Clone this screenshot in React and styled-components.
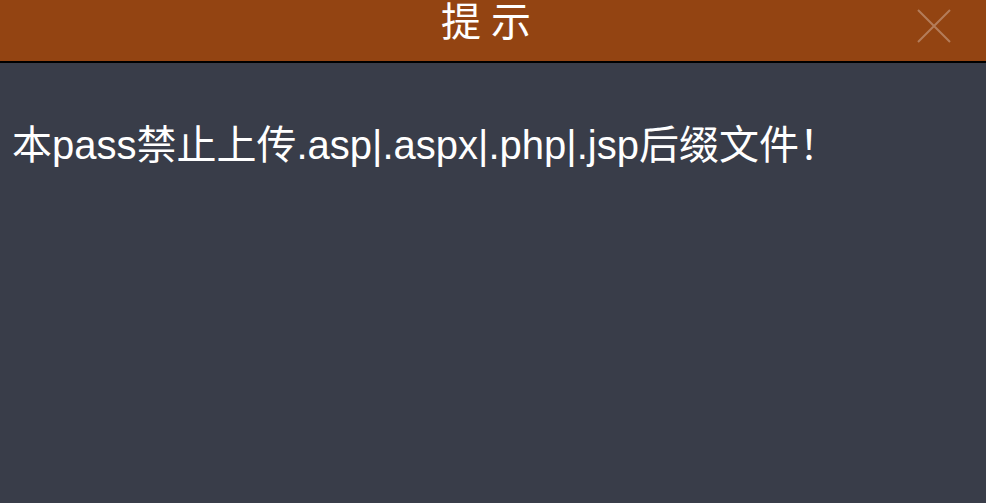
import React from "react";
import styled, { createGlobalStyle } from "styled-components";

const Global = createGlobalStyle`
  html, body { margin: 0; padding: 0; height: 100%; }
  body { background: #393d49; font-family: "Liberation Sans", "Noto Sans CJK SC", sans-serif; }
  #root { height: 100%; }
`;

const Dialog = styled.div`
  display: flex;
  flex-direction: column;
  width: 986px;
  height: 503px;
  background: #393d49;
`;

const Header = styled.div`
  position: relative;
  height: 61px;
  box-sizing: content-box;
  background: #934412;
  border-bottom: 2px solid #000;
  display: flex;
  align-items: flex-start;
  justify-content: center;
  flex-shrink: 0;
`;

const Title = styled.h1`
  margin: 2px 4px 0 0;
  color: #fff;
  font-size: 40px;
  line-height: 40px;
  font-weight: normal;
  letter-spacing: 10px;
`;

const Close = styled.button`
  position: absolute;
  top: 9px;
  right: 35px;
  width: 34px;
  height: 34px;
  padding: 0;
  border: 0;
  background: transparent;
  cursor: pointer;
  opacity: 0.3;
`;

const Body = styled.div`
  padding: 62px 12px 0;
  color: #fff;
  font-size: 40px;
  line-height: 40px;
  white-space: nowrap;
`;

export default function App() {
  return (
    <>
      <Global />
      <Dialog>
        <Header>
          <Title>提示</Title>
          <Close aria-label="close">
            <svg width="34" height="34" viewBox="0 0 34 34">
              <path d="M1 1 L33 33 M33 1 L1 33" stroke="#fff" strokeWidth="2" fill="none" />
            </svg>
          </Close>
        </Header>
        <Body>本pass禁止上传.asp|.aspx|.php|.jsp后缀文件！</Body>
      </Dialog>
    </>
  );
}
